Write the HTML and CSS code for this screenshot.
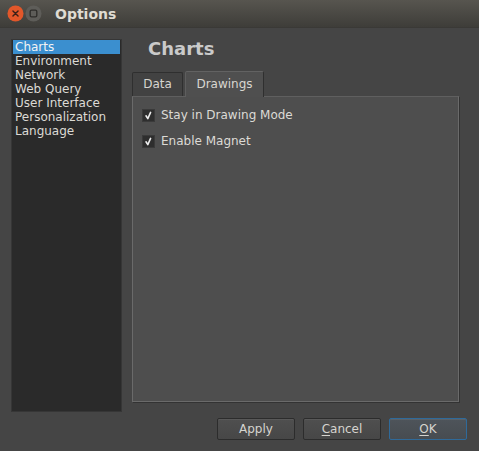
FILE: index.html
```html
<!DOCTYPE html>
<html>
<head>
<meta charset="utf-8">
<link rel="stylesheet" href="styles.css">
</head>
<body>
<div class="window">
  <div class="titlebar">
    <div class="wbtn close"><svg width="17" height="17" viewBox="0 0 18 18"><circle cx="9" cy="9" r="8.5" fill="#e2572a"/><path d="M6.3 6.3 L11.7 11.7 M11.7 6.3 L6.3 11.7" stroke="#3a2018" stroke-width="1.5" stroke-linecap="round"/></svg></div>
    <div class="wbtn max"><svg width="17" height="17" viewBox="0 0 18 18"><circle cx="9" cy="9" r="8.5" fill="#5e5d59"/><rect x="5.5" y="5.5" width="7" height="7" rx="1.5" fill="none" stroke="#2e2d2a" stroke-width="1.4"/></svg></div>
    <div class="title">Options</div>
  </div>
  <div class="main">
    <ul class="sidebar">
      <li class="sel">Charts</li>
      <li>Environment</li>
      <li>Network</li>
      <li>Web Query</li>
      <li>User Interface</li>
      <li>Personalization</li>
      <li>Language</li>
    </ul>
    <div class="content">
      <div class="heading">Charts</div>
      <div class="tabs">
        <div class="tab">Data</div>
        <div class="tab active">Drawings</div>
      </div>
      <div class="pane">
        <label class="check"><span class="box"><svg width="11" height="11" viewBox="0 0 11 11"><path d="M3 5.8 L4.8 8.6 L7.6 2.4" fill="none" stroke="#ececec" stroke-width="1.6" stroke-linecap="round" stroke-linejoin="round"/></svg></span>Stay in Drawing Mode</label>
        <label class="check"><span class="box"><svg width="11" height="11" viewBox="0 0 11 11"><path d="M3 5.8 L4.8 8.6 L7.6 2.4" fill="none" stroke="#ececec" stroke-width="1.6" stroke-linecap="round" stroke-linejoin="round"/></svg></span>Enable Magnet</label>
      </div>
    </div>
  </div>
  <div class="footer">
    <div class="btn">Apply</div>
    <div class="btn"><u>C</u>ancel</div>
    <div class="btn default"><u>O</u>K</div>
  </div>
</div>
</body>
</html>
```
FILE: styles.css
```css
html, body {
  margin: 0;
  padding: 0;
}
body {
  width: 479px;
  height: 451px;
  background: #454545;
  font-family: "DejaVu Sans", sans-serif;
  font-size: 12px;
  color: #dcdad5;
  overflow: hidden;
}
.window {
  display: flex;
  flex-direction: column;
  height: 451px;
}
.titlebar {
  height: 28px;
  background: linear-gradient(#57554f, #3e3d39);
  display: flex;
  align-items: center;
  padding-left: 7px;
  box-sizing: border-box;
  border-bottom: 1px solid #3a3936;
}
.wbtn {
  width: 17px;
  height: 17px;
  margin-right: 1px;
  display: flex;
}
.title {
  margin-left: 12px;
  font-weight: bold;
  font-size: 14px;
  color: #dfdbd2;
}
.main {
  display: flex;
  align-items: flex-start;
  padding: 11px 0 0 11px;
  height: 373px;
}
.sidebar {
  list-style: none;
  margin: 0;
  padding: 0 1px;
  width: 111px;
  height: 373px;
  box-sizing: border-box;
  background: #2a2a2a;
  border: 1px solid #363636;
}
.sidebar li {
  height: 14px;
  line-height: 14px;
  padding-left: 2px;
}
.sidebar li.sel {
  background: #3b8fcf;
  color: #f4f4f4;
}
.content {
  margin-left: 10px;
  width: 327px;
  height: 363px;
  display: flex;
  flex-direction: column;
}
.heading {
  font-size: 18px;
  font-weight: bold;
  color: #cacaca;
  padding-left: 16px;
  height: 31px;
  line-height: 20px;
}
.tabs {
  display: flex;
  align-items: flex-end;
  height: 26px;
  position: relative;
  z-index: 1;
}
.tab {
  width: 51px;
  height: 24px;
  box-sizing: border-box;
  border: 1px solid #2f2f2f;
  border-bottom: none;
  border-radius: 2px 2px 0 0;
  background: #424242;
  text-align: center;
  line-height: 23px;
  color: #d6d4cf;
  margin-right: 2px;
}
.tab.active {
  width: 79px;
  height: 26px;
  background: #4f4f4f;
  border-color: #626262 #2f2f2f transparent #5e5e5e;
  color: #d8d6d0;
  line-height: 24px;
  margin-bottom: -1px;
}
.pane {
  flex: 1;
  background: #4e4e4e;
  border: 1px solid #6a6a6a;
  border-top-color: #5f5f5f;
  box-shadow: 1px 1px 0 #333;
  padding: 11px 0 0 9px;
  display: flex;
  flex-direction: column;
  gap: 12px;
}
.check {
  display: flex;
  align-items: center;
  height: 14px;
  color: #dcdad5;
}
.box {
  width: 13px;
  height: 13px;
  background: #2e2e2e;
  border: 1px solid #3a3a3a;
  box-sizing: border-box;
  margin-right: 6px;
  display: flex;
}
.footer {
  display: flex;
  justify-content: flex-end;
  gap: 8px;
  padding: 6px 12px 0 0;
}
.btn {
  width: 78px;
  height: 22px;
  box-sizing: border-box;
  border: 1px solid #2c2c2c;
  border-radius: 2px;
  background: linear-gradient(#4f4f4f, #474747);
  box-shadow: inset 0 1px 0 #595959;
  text-align: center;
  line-height: 20px;
  font-size: 12px;
  color: #d6d4cf;
}
.btn u {
  text-decoration-thickness: 1px;
  text-underline-offset: 2px;
}
.btn.default {
  border-color: #2f6a9a;
  background: linear-gradient(#4e545a, #474c51);
  box-shadow: inset 0 1px 0 #5a6168;
}
```
